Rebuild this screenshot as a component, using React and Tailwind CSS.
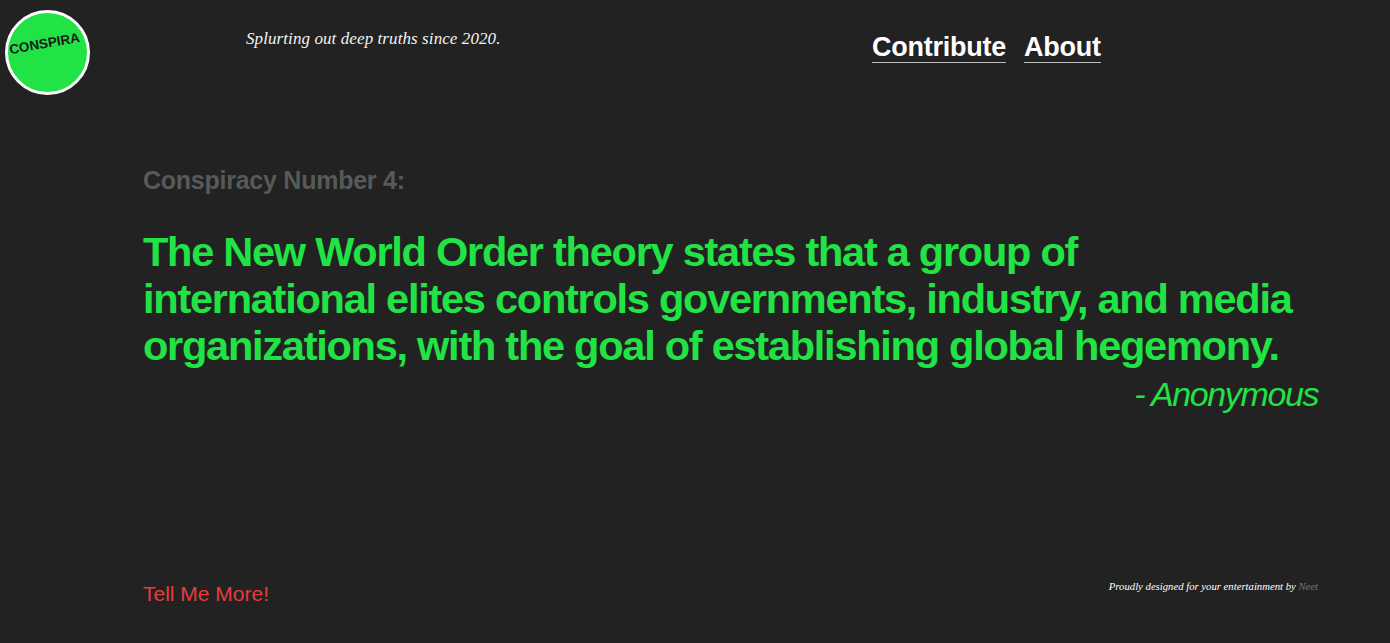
export default function App() {
  return (
    <div className="h-[643px] w-full overflow-hidden bg-[#222222] flex flex-col font-['Liberation_Sans',Arial,sans-serif]">
      {/* Header */}
      <header className="flex items-start h-[96px]">
        <div className="ml-[5px] mt-[10px] w-[85px] h-[85px] rounded-full bg-[#22e345] border-[3px] border-white flex items-center justify-center shrink-0">
          <span className="text-[13.5px] font-bold text-[#1a1a1a] -rotate-[10deg] -mt-[17px] -ml-[5px]">CONSPIRA</span>
        </div>
        <p className="ml-[156px] mt-[29px] w-[440px] font-['Liberation_Serif',serif] italic text-[17px] leading-[20px] tracking-[0.09px] text-[#f2f2f2]">
          Splurting out deep truths since 2020.
        </p>
        <nav className="ml-[186px] mt-[33px] flex gap-[18px] text-[27px] leading-[29px] font-bold text-white tracking-[-0.25px]">
          <a className="border-b border-[#bdbdbd]">Contribute</a>
          <a className="border-b border-[#bdbdbd]">About</a>
        </nav>
      </header>

      {/* Conspiracy */}
      <main className="flex-1 pl-[143px] pr-[72px] pt-[68px]">
        <h2 className="text-[25px] leading-[32px] font-bold text-[#565a58] tracking-[-0.25px]">Conspiracy Number 4:</h2>
        <p className="mt-[32px] text-[41.5px] leading-[47px] font-bold text-[#22e345] tracking-[-1.25px]">
          The New World Order theory states that a group of<br />
          international elites controls governments, industry, and media<br />
          organizations, with the goal of establishing global hegemony.
        </p>
        <p className="text-right text-[34px] leading-[38px] italic text-[#22e345] tracking-[-1.4px] mt-[6px]">- Anonymous</p>
      </main>

      {/* Footer */}
      <footer className="flex items-start justify-between pl-[143px] pr-[72px] h-[61px]">
        <a className="text-[21px] leading-[26px] text-[#e63c3c] -mt-px">Tell Me More!</a>
        <p className="font-['Liberation_Serif',serif] italic text-[10.7px] leading-[14px] text-white -mt-[3px]">
          Proudly designed for your entertainment by <span className="text-[#777777]">Neet</span>
        </p>
      </footer>
    </div>
  );
}
